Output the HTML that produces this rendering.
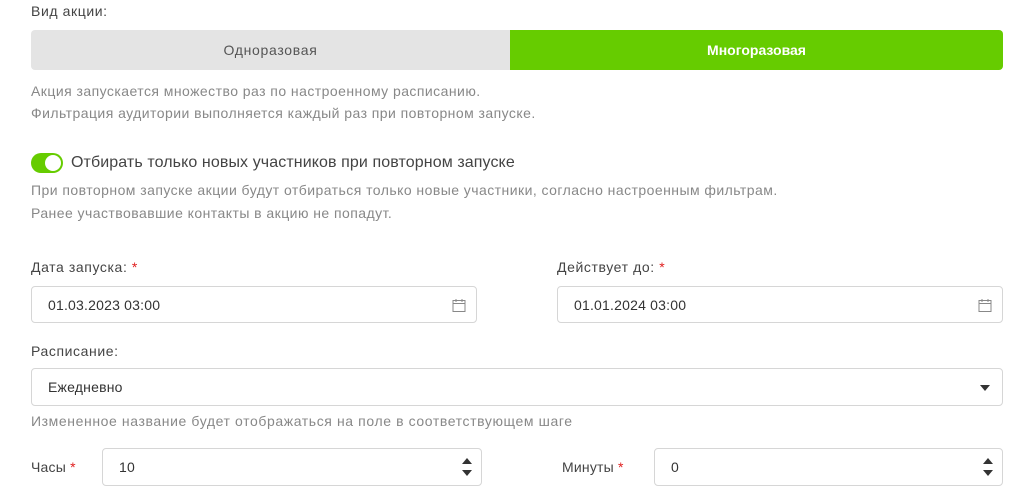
<!DOCTYPE html><html><head><style>
body{margin:0;width:1034px;height:501px;background:#fff;font-family:"Liberation Sans",sans-serif;position:relative;overflow:hidden}
.a{position:absolute;white-space:nowrap}
.lbl{font-size:14px;color:#444;letter-spacing:0.6px}
.hint{font-size:14px;color:#888;letter-spacing:0.45px}
.inp{position:absolute;border:1px solid #d6d6d6;border-radius:4px;box-sizing:border-box;font-size:14px;color:#333;background:#fff}
.inp span{position:absolute;left:16px;top:50%;transform:translateY(-50%);letter-spacing:0.2px}
.st{color:#e02020}
.cal{position:absolute;right:10px;top:11px}
.spin{position:absolute;right:9px;top:9px;width:0;height:0;border-left:5px solid transparent;border-right:5px solid transparent;border-bottom:6px solid #333}
.spin2{position:absolute;right:9px;bottom:9px;width:0;height:0;border-left:5px solid transparent;border-right:5px solid transparent;border-top:6px solid #333}
</style></head><body>
<div class="a lbl" style="left:31px;top:3px">Вид акции:</div>
<div class="a" style="left:31px;top:30px;width:479px;height:40px;background:#e4e4e4;border-radius:4px 0 0 4px;font-size:14px;letter-spacing:0.7px;color:#555;text-align:center;line-height:40px">Одноразовая</div>
<div class="a" style="left:510px;top:30px;width:493px;height:40px;background:#66cc00;border-radius:0 4px 4px 0;font-size:14px;color:#fff;font-weight:bold;text-align:center;line-height:40px">Многоразовая</div>
<div class="a hint" style="left:31px;top:83px">Акция запускается множество раз по настроенному расписанию.</div>
<div class="a hint" style="left:31px;top:105px">Фильтрация аудитории выполняется каждый раз при повторном запуске.</div>
<div class="a" style="left:31px;top:153px;width:32px;height:20px;border-radius:10px;background:#66cc00"><div style="position:absolute;right:2px;top:2px;width:16px;height:16px;border-radius:50%;background:#fff"></div></div>
<div class="a" style="left:71px;top:154px;font-size:16px;color:#444;letter-spacing:0.1px">Отбирать только новых участников при повторном запуске</div>
<div class="a hint" style="left:31px;top:182px">При повторном запуске акции будут отбираться только новые участники, согласно настроенным фильтрам.</div>
<div class="a hint" style="left:31px;top:205px">Ранее участвовавшие контакты в акцию не попадут.</div>
<div class="a lbl" style="left:31px;top:259px">Дата запуска: <span class="st">*</span></div>
<div class="a lbl" style="left:557px;top:259px">Действует до: <span class="st">*</span></div>
<div class="inp" style="left:31px;top:286px;width:446px;height:37px"><span>01.03.2023 03:00</span><svg class="cal" width="14" height="14" viewBox="0 0 14 14" fill="none" stroke="#888"><rect x="1" y="2.5" width="12" height="11"/><path d="M1 5.5h12M4 1v3M10 1v3"/></svg></div>
<div class="inp" style="left:557px;top:286px;width:446px;height:37px"><span>01.01.2024 03:00</span><svg class="cal" width="14" height="14" viewBox="0 0 14 14" fill="none" stroke="#888"><rect x="1" y="2.5" width="12" height="11"/><path d="M1 5.5h12M4 1v3M10 1v3"/></svg></div>
<div class="a lbl" style="left:31px;top:343px">Расписание:</div>
<div class="inp" style="left:31px;top:368px;width:972px;height:38px"><span>Ежедневно</span><div style="position:absolute;right:12px;top:16px;border-left:5px solid transparent;border-right:5px solid transparent;border-top:6px solid #333"></div></div>
<div class="a hint" style="left:31px;top:413px;letter-spacing:0.6px">Измененное название будет отображаться на поле в соответствующем шаге</div>
<div class="a lbl" style="left:31px;top:459px;letter-spacing:0.2px">Часы <span class="st">*</span></div>
<div class="inp" style="left:102px;top:448px;width:380px;height:38px"><span>10</span><div class="spin"></div><div class="spin2"></div></div>
<div class="a lbl" style="left:562px;top:459px;letter-spacing:0.2px">Минуты <span class="st">*</span></div>
<div class="inp" style="left:654px;top:448px;width:349px;height:38px"><span>0</span><div class="spin"></div><div class="spin2"></div></div>
</body></html>
